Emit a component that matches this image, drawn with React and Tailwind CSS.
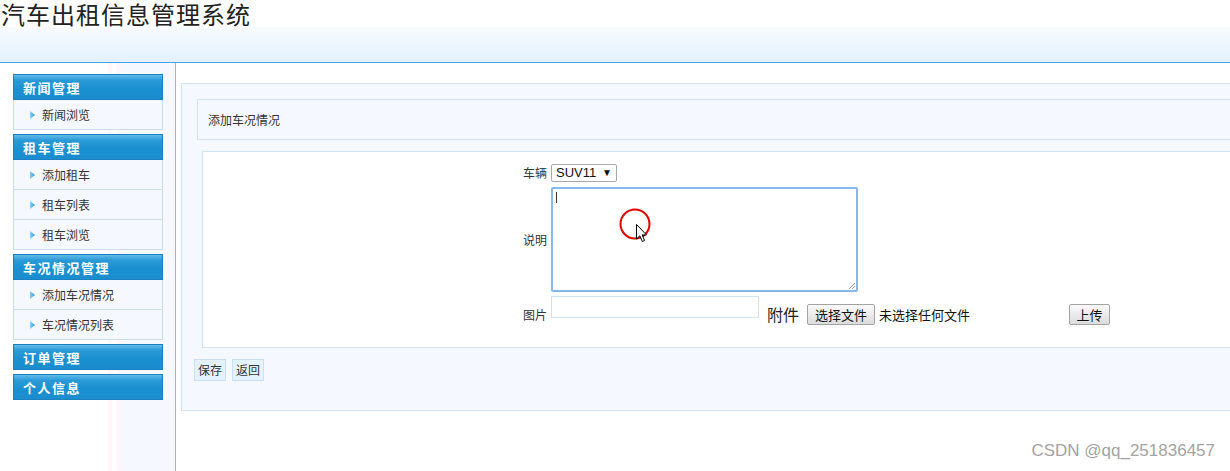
import React from "react";

const groups = [
  { title: "新闻管理", items: ["新闻浏览"] },
  { title: "租车管理", items: ["添加租车", "租车列表", "租车浏览"] },
  { title: "车况情况管理", items: ["添加车况情况", "车况情况列表"] },
  { title: "订单管理", items: [] },
  { title: "个人信息", items: [] },
];

function Arrow() {
  return (
    <svg width="5" height="8" viewBox="0 0 5 8" className="shrink-0">
      <defs>
        <linearGradient id="ag" x1="0" y1="0" x2="1" y2="0">
          <stop offset="0" stopColor="#8fd0f5" />
          <stop offset="1" stopColor="#2a93d8" />
        </linearGradient>
      </defs>
      <polygon points="0,0 5,4 0,8" fill="url(#ag)" />
    </svg>
  );
}

function Group({ title, items }) {
  return (
    <div className="w-[150px]">
      <div className="h-[26px] border border-[#1b80c2] bg-[linear-gradient(to_bottom,#62bbea_0%,#2a9ad7_22%,#1a90d1_60%,#1b8dcd_100%)] pl-[9px] pt-[2px] flex items-center text-white font-bold text-[13px] tracking-[1.5px] leading-[16px]">
        {title}
      </div>
      {items.map((it) => (
        <div
          key={it}
          className="h-[30px] bg-[#f5f9ff] border-x border-b border-[#c8dcec] flex items-center pl-[16px] pt-[1px] gap-[7px] text-[12px] leading-[16px] text-[#333]"
        >
          <Arrow />
          <span>{it}</span>
        </div>
      ))}
    </div>
  );
}

function FileButton({ children, w }) {
  return (
    <div
      className={`${w} h-[21px] border border-[#a3a3a3] rounded-[2px] bg-[linear-gradient(to_bottom,#fafafa,#dcdcdc)] flex items-center justify-center text-[13px] leading-[16px] text-[#111]`}
    >
      {children}
    </div>
  );
}

export default function App() {
  return (
    <div className="relative w-[1230px] h-[471px] overflow-hidden bg-white font-['Noto_Sans_CJK_SC',sans-serif] text-[#333]">
      {/* Header */}
      <div className="pl-[1px] text-[24px] leading-[27px] tracking-[1px] text-[#222] whitespace-nowrap">
        汽车出租信息管理系统
      </div>
      <div className="h-[36px] bg-[linear-gradient(to_bottom,#f8fbff,#e2f1fd)] border-b border-[#45a1e3]" />

      {/* Body */}
      <div className="flex h-[408px]">
        <aside className="w-[176px] shrink-0 border-r border-[#8fb9d9] bg-[linear-gradient(to_right,#ffffff_0%,#ffffff_61%,#fdf5fa_63%,#ffffff_65%,#fcf6fc_68%,#f5f9ff_71%,#f5f9ff_100%)] pt-[11px] pl-[13px]">
          <div className="flex flex-col gap-[4px]">
            {groups.map((g) => (
              <Group key={g.title} {...g} />
            ))}
          </div>
        </aside>

        <main className="flex-1 pl-[5px] pt-[20px]">
          <div className="w-[1070px] h-[328px] border border-[#cfe3f5] bg-[#f5f9ff] pt-[15px]">
            <div className="ml-[15px] h-[41px] border border-[#cfe3f5] bg-[#f5f9ff] flex items-center pl-[10px] text-[12px] leading-[16px] text-[#333]">
              添加车况情况
            </div>

            <div className="ml-[20px] mt-[11px] h-[197px] border border-[#cfe3f5] bg-white pt-[12px] pl-[315px]">
              {/* Row 1 */}
              <div className="flex items-center h-[18px]">
                <div className="w-[30px] pr-[1px] text-right text-[12px] leading-[16px] text-[#333]">车辆</div>
                <div className="ml-[3px] w-[66px] h-[18px] border border-[#a9a9a9] rounded-[2px] bg-white flex items-center pl-[4px] pr-[4px] justify-between font-['Liberation_Sans',Arial,sans-serif] text-[13px] leading-[16px] text-[#111]">
                  <span>SUV11</span>
                  <span className="text-[10px]">▼</span>
                </div>
              </div>

              {/* Row 2 */}
              <div className="flex items-center mt-[5px]">
                <div className="w-[30px] pr-[1px] text-right text-[12px] leading-[16px] text-[#333]">说明</div>
                <div className="ml-[3px] relative w-[307px] h-[105px] border-2 border-[#88b7ee] rounded-[2px] bg-white">
                  <div className="absolute left-[3px] top-[3px] w-[1px] h-[11px] bg-[#333]" />
                  <svg className="absolute right-[1px] bottom-[1px]" width="7" height="7" viewBox="0 0 7 7">
                    <line x1="7" y1="1" x2="1" y2="7" stroke="#999" strokeWidth="1" />
                    <line x1="7" y1="4" x2="4" y2="7" stroke="#999" strokeWidth="1" />
                  </svg>
                </div>
              </div>

              {/* Row 3 */}
              <div className="flex items-start mt-[4px] h-[29px]">
                <div className="w-[30px] pr-[1px] mt-[11px] text-right text-[12px] leading-[16px] text-[#333]">图片</div>
                <div className="ml-[3px] w-[208px] h-[22px] border border-[#cfe3f5] bg-white" />
                <div className="ml-[8px] mt-[8px] text-[16px] leading-[20px] text-[#222]">附件</div>
                <div className="ml-[8px] mt-[8px]">
                  <FileButton w="w-[68px]">选择文件</FileButton>
                </div>
                <div className="ml-[4px] mt-[11px] text-[13px] leading-[16px] text-[#111] whitespace-nowrap">未选择任何文件</div>
                <div className="ml-[99px] mt-[8px]">
                  <FileButton w="w-[41px]">上传</FileButton>
                </div>
              </div>
            </div>

            <div className="ml-[12px] mt-[11px] flex gap-[6px]">
              <div className="w-[32px] h-[22px] border border-[#c7e0f7] bg-[#e4f1ff] flex items-center justify-center text-[12px] leading-[16px] text-[#333]">保存</div>
              <div className="w-[32px] h-[22px] border border-[#c7e0f7] bg-[#e4f1ff] flex items-center justify-center text-[12px] leading-[16px] text-[#333]">返回</div>
            </div>
          </div>
        </main>
      </div>

      {/* Click indicator + cursor overlay */}
      <svg className="absolute left-[619px] top-[208px]" width="34" height="38" viewBox="0 0 34 38">
        <circle cx="16" cy="16" r="14.5" fill="none" stroke="#e00000" strokeWidth="2" />
        <path d="M17.5 16.5 L17.5 31 L20.8 27.8 L23.3 33.5 L25.6 32.5 L23.1 26.9 L27.5 26.9 Z" fill="#fff" stroke="#000" strokeWidth="1" strokeLinejoin="miter" />
      </svg>

      {/* Watermark */}
      <div className="absolute right-[15px] bottom-[10px] font-['Liberation_Sans',Arial,sans-serif] text-[17px] leading-[20px] text-[#a3a3a3] whitespace-nowrap">
        CSDN @qq_251836457
      </div>
    </div>
  );
}
